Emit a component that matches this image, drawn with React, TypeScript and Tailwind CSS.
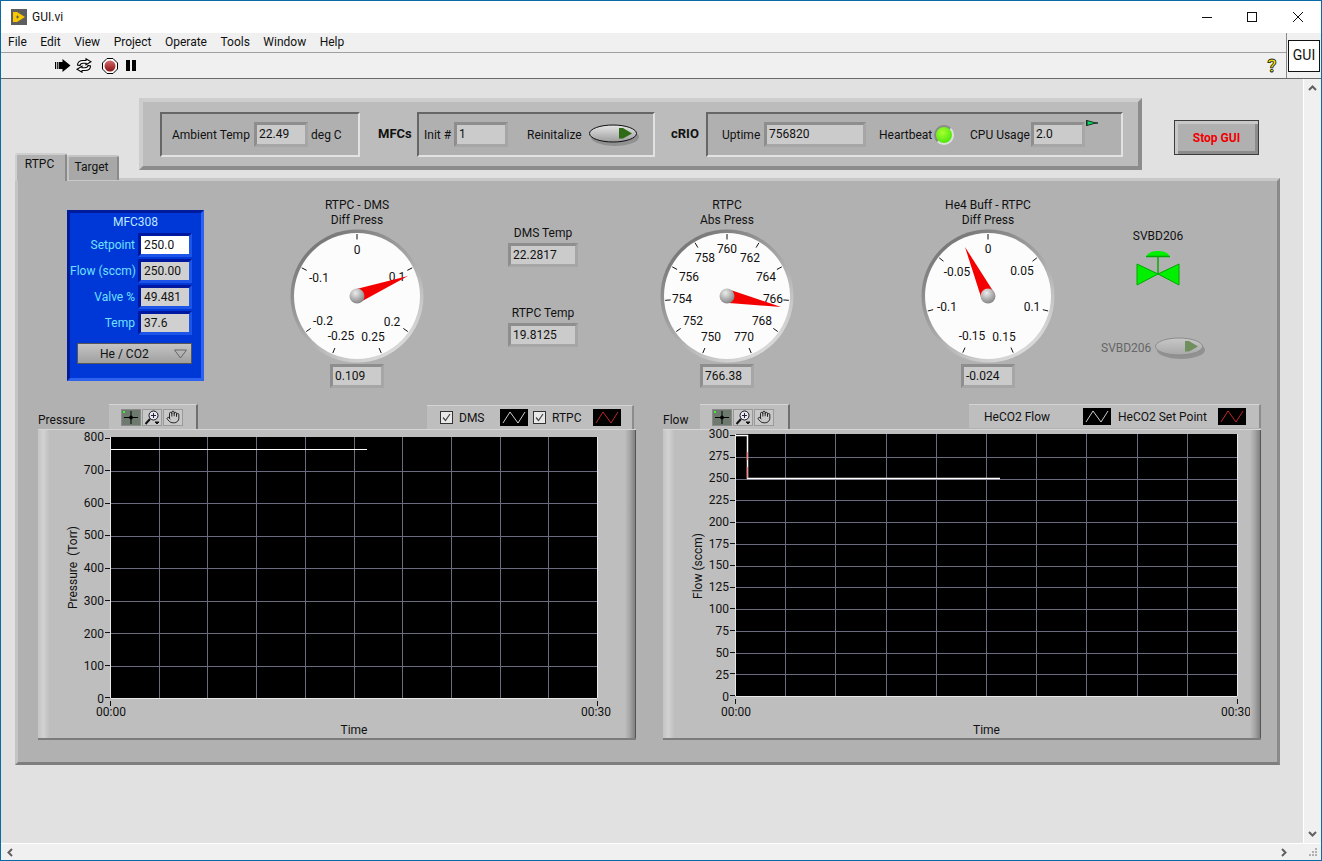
import { Hand } from "lucide-react";

const fontStack = "font-['Roboto','Noto_Sans',sans-serif]";

function NumBox({ value, w = "w-[54px]", h = "h-[24px]" }: { value: string; w?: string; h?: string }) {
  return (
    <div className={`${w} ${h} shrink-0 border-[3px] border-t-[#8e8e8e] border-l-[#8e8e8e] border-r-[#a6a6a6] border-b-[#a6a6a6] bg-[#cbcbcb] pl-[2px] text-[12px] leading-[18px] text-[#111]`}>
      {value}
    </div>
  );
}

function Group({ className, children }: { className: string; children: React.ReactNode }) {
  return (
    <div className={`${className} mt-[1px] h-[45px] flex items-center border-2 border-t-[#666] border-l-[#666] border-r-[#e2e2e2] border-b-[#e2e2e2] bg-[#b0b0b0] text-[12px] text-[#111]`}>
      {children}
    </div>
  );
}

function Toggle({ dim = false }: { dim?: boolean }) {
  const line = dim ? "#8c8c8c" : "#111";
  const fill = dim ? "#6f8f5f" : "#2f6a14";
  return (
    <svg width="52" height="24" className="shrink-0">
      <defs>
        <linearGradient id={dim ? "tgd" : "tg"} x1="0" y1="0" x2="0" y2="1">
          <stop offset="0" stopColor={dim ? "#c8c8c8" : "#e6e6e6"} />
          <stop offset="1" stopColor={dim ? "#a8a8a8" : "#9c9c9c"} />
        </linearGradient>
      </defs>
      <ellipse cx="26" cy="14" rx="24" ry="9" fill="#777" opacity="0.55" />
      <ellipse cx="24" cy="10.5" rx="23.5" ry="8.5" fill={`url(#${dim ? "tgd" : "tg"})`} stroke={line} />
      <path d="M30 5h4l9 5.5-9 5h-4z" fill={fill} />
    </svg>
  );
}

function MfcRow({ label, value, input = false }: { label: string; value: string; input?: boolean }) {
  return (
    <div className="flex h-[26px] items-center">
      <div className="w-[68px] pr-[3px] text-right text-[12px] whitespace-nowrap text-[#6fe0ff]">{label}</div>
      <div className={`w-[54px] h-[24px] border-[3px] border-t-[#0018a0] border-l-[#0018a0] border-r-[#1c55e8] border-b-[#1c55e8] pl-[3px] text-[12px] leading-[18px] text-[#111] ${input ? "bg-white" : "bg-[#d0d0d0]"}`}>
        {value}
      </div>
    </div>
  );
}

type GaugeProps = {
  id: string;
  title: [string, string];
  value: string;
  ticks: number[];
  labels: [string, number, number][];
  tip: [number, number];
};

function Gauge({ id, title, value, ticks, labels, tip }: GaugeProps) {
  const c = 68;
  const len = Math.hypot(tip[0], tip[1]);
  const nx = (-tip[1] / len) * 7;
  const ny = (tip[0] / len) * 7;
  return (
    <div className="flex w-[136px] shrink-0 flex-col items-center mt-[17px]">
      <div className="h-[30px] text-center text-[12px] leading-[15px] whitespace-nowrap text-[#111]">
        {title[0]}
        <br />
        {title[1]}
      </div>
      <svg width="136" height="136">
        <defs>
          <linearGradient id={`${id}-b`} x1="0.15" y1="0" x2="0.85" y2="1">
            <stop offset="0" stopColor="#6e6e6e" />
            <stop offset="0.5" stopColor="#a8a8a8" />
            <stop offset="1" stopColor="#e4e4e4" />
          </linearGradient>
          <radialGradient id={`${id}-h`} cx="0.4" cy="0.3" r="0.8">
            <stop offset="0" stopColor="#ececec" />
            <stop offset="1" stopColor="#777" />
          </radialGradient>
        </defs>
        <circle cx={c} cy={c} r="66.5" fill={`url(#${id}-b)`} />
        <circle cx={c} cy={c} r="63" fill="#fcfcfc" />
        {ticks.map((a) => {
          const r = (a * Math.PI) / 180;
          return (
            <line
              key={a}
              x1={c + Math.sin(r) * 56.5}
              y1={c - Math.cos(r) * 56.5}
              x2={c + Math.sin(r) * 62}
              y2={c - Math.cos(r) * 62}
              stroke="#111"
            />
          );
        })}
        {labels.map(([t, x, y]) => (
          <text key={t} x={c + x} y={c + y} fontSize="12" textAnchor="middle" dominantBaseline="central" fill="#111">
            {t}
          </text>
        ))}
        <polygon points={`${c + nx},${c + ny} ${c - nx},${c - ny} ${c + tip[0]},${c + tip[1]}`} fill="#f40000" />
        <circle cx={c} cy={c} r="7.5" fill={`url(#${id}-h)`} />
      </svg>
      <NumBox value={value} />
    </div>
  );
}

function TempReadout({ label, value, className }: { label: string; value: string; className: string }) {
  return (
    <div className={className}>
      <div className="h-[16px] text-center text-[12px] leading-[16px] whitespace-nowrap text-[#111]">{label}</div>
      <div className="mt-[2px]">
        <NumBox value={value} w="w-[70px]" />
      </div>
    </div>
  );
}

function CursorBtn() {
  return (
    <div className="flex h-[17px] w-[20px] items-center justify-center border border-[#8a8a8a] bg-[#6d7a6d]">
      <svg width="18" height="15" stroke="#000">
        <path d="M9 1v13M2 7.5h14" />
        <circle cx="9" cy="7.5" r="1.5" />
        <rect x="1" y="1" width="2" height="2" fill="#3cf03c" stroke="none" />
      </svg>
    </div>
  );
}

function ZoomBtn() {
  return (
    <div className="flex h-[17px] w-[20px] items-center justify-center border border-[#9a9a9a] bg-[#c8c8c8]">
      <svg width="18" height="15" fill="none" stroke="#111">
        <circle cx="10.5" cy="5.5" r="4.5" fill="#e8e8f4" />
        <path d="M8 5.5h5M10.5 3v5" stroke="#223" />
        <path d="M7 9l-4.5 5" strokeWidth="2" />
        <path d="M12 12h4l-2 2z" fill="#111" />
      </svg>
    </div>
  );
}

function HandBtn() {
  return (
    <div className="flex h-[17px] w-[20px] items-center justify-center border border-[#9a9a9a] bg-[#c8c8c8]">
      <Hand size={14} color="#111" strokeWidth={1.5} />
    </div>
  );
}

function Palette({ className }: { className: string }) {
  return (
    <div className={`${className} flex h-[25px] items-center gap-[1px] border-t border-t-[#d4d4d4] border-r-2 border-r-[#707070] bg-[#bebebe] pl-[12px]`}>
      <CursorBtn />
      <ZoomBtn />
      <HandBtn />
    </div>
  );
}

function Swatch({ color, className = "" }: { color: string; className?: string }) {
  return (
    <svg width="28" height="17" className={`shrink-0 ${className}`}>
      <rect width="28" height="17" fill="#000" />
      <path d="M3 14L10 3l8 11 7-11" fill="none" stroke={color} strokeWidth="0.8" />
    </svg>
  );
}

function Check({ className = "" }: { className?: string }) {
  return (
    <svg width="13" height="13" className={`shrink-0 ${className}`}>
      <rect x="0.5" y="0.5" width="12" height="12" fill="#e8e8e8" stroke="#333" />
      <path d="M3 6.5l2.5 3L10 3" fill="none" stroke="#444" strokeWidth="1.2" />
    </svg>
  );
}

type ChartProps = {
  title: string;
  yTitle: string;
  yLabels: string[];
  plotW: number;
  plotH: number;
  padTop: string;
  palette: string;
  legend: React.ReactNode;
  labelPad: string;
  timeH: string;
  lines: React.ReactNode;
};

function Chart({ title, yTitle, yLabels, plotW, plotH, padTop, palette, legend, labelPad, timeH, lines }: ChartProps) {
  const step = (plotH - 2) / (yLabels.length - 1);
  return (
    <div className="flex w-[598px] shrink-0 flex-col">
      <div className="flex h-[25px] items-end">
        <div className="w-[46px] shrink-0 pb-[1px] text-[12px] leading-[15px] text-[#111]">{title}</div>
        <Palette className={palette} />
        {legend}
      </div>
      <div className="flex h-[311px] border-t border-t-[#d6d6d6] border-b-2 border-b-[#7c7c7c] bg-[#bebebe]">
        <div className="w-[11px] shrink-0 bg-linear-to-r from-[#c4c4c4] via-[#d2d2d2] to-[#c0c0c0]" />
        <div className={`flex min-w-0 flex-1 flex-col ${padTop}`}>
          <div className="flex">
            <div className="flex w-[40px] shrink-0 items-center justify-center pl-[7px]">
              <span className="rotate-180 text-[12px] whitespace-pre text-[#111] [writing-mode:vertical-rl]">{yTitle}</span>
            </div>
            <div className="-my-[6px] flex w-[15px] shrink-0 flex-col items-end justify-between text-[12px] leading-[12px] text-[#111]">
              {yLabels.map((l) => (
                <span key={l}>{l}</span>
              ))}
            </div>
            <div className="flex w-[6px] flex-col justify-between py-[1px]">
              {yLabels.map((l) => (
                <span key={l} className="ml-[1px] h-[1px] w-[5px] bg-[#111]" />
              ))}
            </div>
            <svg width={plotW} height={plotH} className="shrink-0">
              <rect width={plotW} height={plotH} fill="#000" />
              {Array.from({ length: 9 }, (_, i) => {
                const x = Math.round(((plotW - 1) * (i + 1)) / 10) + 0.5;
                return <line key={i} x1={x} x2={x} y1="0" y2={plotH} stroke="#6b6b80" />;
              })}
              {yLabels.slice(1, -1).map((l, i) => {
                const y = Math.round(1 + step * (i + 1)) + 0.5;
                return <line key={l} x1="0" x2={plotW} y1={y} y2={y} stroke="#6b6b80" />;
              })}
              {lines}
              <path d={`M0.5 0V${plotH - 0.5}H${plotW - 0.5}V0`} fill="none" stroke="#e8e8e8" />
            </svg>
          </div>
          <div className="flex">
            <div className="w-[61px] shrink-0" />
            <div className="flex shrink-0 justify-between" style={{ width: plotW }}>
              <span className="mt-[2px] h-[5px] w-[1px] bg-[#111]" />
              <span className="mt-[2px] h-[5px] w-[1px] bg-[#111]" />
            </div>
          </div>
          <div className={`flex text-[12px] leading-[13px] text-[#111] ${labelPad}`}>
            <div className="w-[47px] shrink-0" />
            <div className="flex shrink-0 justify-between" style={{ width: plotW + 27 }}>
              <span>00:00</span>
              <span>00:30</span>
            </div>
          </div>
          <div className={`flex text-[12px] leading-[15px] text-[#111] ${timeH}`}>
            <div className="w-[61px] shrink-0" />
            <div className="shrink-0 text-center" style={{ width: plotW }}>
              Time
            </div>
          </div>
        </div>
        <div className="w-[11px] shrink-0 border-r border-r-[#555] bg-linear-to-r from-[#bebebe] via-[#a4a4a4] to-[#808080]" />
      </div>
    </div>
  );
}

function RunIcon() {
  return (
    <svg width="16" height="13" viewBox="0 0 16 13">
      <path d="M4 3h3.5V0L15.5 6.5 7.5 13v-3H4z" fill="#000" />
      <path d="M0 3h1.2v7H0zM2.2 3h1.2v7H2.2z" fill="#000" />
    </svg>
  );
}

function ContinuousIcon() {
  return (
    <svg width="16" height="15" viewBox="0 0 16 15" fill="#fff" stroke="#000" strokeWidth="1.1">
      <path d="M1.5 7C1.5 4 4 2.5 7 2.5h3V.8l5 3-5 3V5.2H7C5.5 5.2 4.2 6 4 7.5z" />
      <path d="M14.5 8c0 3-2.5 4.5-5.5 4.5H6v1.7l-5-3 5-3v1.6h3c1.5 0 2.8-.8 3-2.3z" />
    </svg>
  );
}

function AbortIcon() {
  return (
    <svg width="16" height="16" viewBox="0 0 16 16">
      <defs>
        <linearGradient id="abort" x1="0" y1="0" x2="0" y2="1">
          <stop offset="0" stopColor="#d46a6a" />
          <stop offset="1" stopColor="#8c1414" />
        </linearGradient>
      </defs>
      <path d="M5 .5h6L15.5 5v6L11 15.5H5L.5 11V5z" fill="#fff" stroke="#000" />
      <circle cx="8" cy="8" r="5.5" fill="url(#abort)" />
    </svg>
  );
}

export default function App() {
  return (
    <div className={`flex h-[861px] w-[1322px] flex-col overflow-hidden border border-[#0a6aa8] bg-white ${fontStack}`}>
      {/* title bar */}
      <div className="flex h-[32px] shrink-0 items-center bg-white pl-[10px] text-[12px] text-[#111]">
        <svg width="16" height="16" viewBox="0 0 16 16" className="mr-[5px]">
          <rect width="16" height="16" fill="#5e5e5e" />
          <path d="M2 3h4l8 5-8 5H2z" fill="#fac800" />
          <path d="M5 8h3M6.5 6.5v3" stroke="#5e5e5e" />
        </svg>
        <span>GUI.vi</span>
        <div className="ml-auto flex items-center">
          <svg width="46" height="12" stroke="#111">
            <path d="M19 6.5h10" />
          </svg>
          <svg width="46" height="12" fill="none" stroke="#111">
            <rect x="18.5" y="1.5" width="9" height="9" />
          </svg>
          <svg width="46" height="12" fill="none" stroke="#111">
            <path d="M18 1l10 10M28 1L18 11" />
          </svg>
        </div>
      </div>

      {/* menu and toolbar */}
      <div className="flex h-[46px] shrink-0 border-b border-b-[#696969] bg-[#f0f0f0]">
        <div className="flex flex-1 flex-col">
          <div className="flex h-[20px] items-center gap-[13.5px] border-b border-b-[#a0a0a0] pl-[7px] pb-[1px] text-[12px] text-[#111]">
            <span>File</span>
            <span>Edit</span>
            <span>View</span>
            <span>Project</span>
            <span>Operate</span>
            <span>Tools</span>
            <span>Window</span>
            <span>Help</span>
          </div>
          <div className="flex flex-1 items-center pl-[54px]">
            <RunIcon />
            <div className="ml-[5px]">
              <ContinuousIcon />
            </div>
            <div className="ml-[10px]">
              <AbortIcon />
            </div>
            <svg width="10" height="11" className="ml-[8px]">
              <path d="M0 0h4v11H0zM6 0h4v11H6z" fill="#000" />
            </svg>
            <svg width="18" height="20" className="ml-auto mr-[5px]">
              <text x="9" y="16" fontSize="18" fontWeight="700" textAnchor="middle" fill="#f6f000" stroke="#111" strokeWidth="0.8">
                ?
              </text>
            </svg>
          </div>
        </div>
        <div className="flex w-[35px] items-center justify-end border-l border-l-[#8a8a8a] pr-[1px]">
          <div className="flex h-[32px] w-[32px] items-center justify-center border border-[#111] bg-white text-[14px] text-[#111]">GUI</div>
        </div>
      </div>

      <div className="flex min-h-0 flex-1">
        {/* front panel */}
        <div className="flex min-w-0 flex-1 flex-col border-r border-r-white bg-[#e1e1e1] pl-[14px] pt-[19px]">
          <div className="flex h-[82px] shrink-0">
            <div className="relative z-10 flex w-[124px] shrink-0 items-end text-[12px] text-[#111]">
              <div className="h-[28px] w-[52px] rounded-t-[3px] border-[2px] border-b-0 border-t-[#cfcfcf] border-l-[#cfcfcf] border-r-[#8a8a8a] bg-[#b1b1b1] pr-[3px] text-center -mb-[1px]">RTPC</div>
              <div className="h-[25px] w-[52px] rounded-t-[3px] border-[2px] border-b-0 border-t-[#c4c4c4] border-l-[#c4c4c4] border-r-[#8a8a8a] bg-[#a8a8a8] pt-[1px] pr-[3px] text-center">Target</div>
            </div>

            {/* status strip */}
            <div className="flex h-[72px] w-[1003px] shrink-0 items-center border-[4px] border-t-[#cdcdcd] border-l-[#cdcdcd] border-r-[#8c8c8c] border-b-[#8c8c8c] bg-[#bcbcbc] pl-[17px]">
              <Group className="w-[200px] pl-[10px]">
                <span className="w-[82px] shrink-0 whitespace-nowrap">Ambient Temp</span>
                <NumBox value="22.49" h="h-[25px]" />
                <span className="ml-[3px] whitespace-nowrap">deg C</span>
              </Group>
              <span className="w-[57px] shrink-0 pl-[18px] text-[13px] font-bold text-[#111]">MFCs</span>
              <Group className="w-[238px] pl-[5px]">
                <span className="w-[30px] shrink-0 whitespace-nowrap">Init #</span>
                <NumBox value="1" h="h-[25px]" />
                <span className="ml-[19px] w-[62px] shrink-0 whitespace-nowrap">Reinitalize</span>
                <Toggle />
              </Group>
              <span className="w-[51px] shrink-0 pl-[16px] text-[13px] font-bold text-[#111]">cRIO</span>
              <Group className="w-[417px] pl-[14px]">
                <span className="w-[42px] shrink-0">Uptime</span>
                <NumBox value="756820" w="w-[102px]" h="h-[25px]" />
                <span className="ml-[13px] w-[55px] shrink-0">Heartbeat</span>
                <span className="h-[20px] w-[20px] shrink-0 rounded-full border-2 border-t-[#8a8a8a] border-l-[#8a8a8a] border-r-[#e0e0e0] border-b-[#e0e0e0] bg-[radial-gradient(circle_at_40%_35%,#a8ff30,#30e000)]" />
                <span className="ml-[16px] w-[61px] shrink-0 whitespace-nowrap">CPU Usage</span>
                <NumBox value="2.0" h="h-[25px]" />
                <svg width="13" height="6" className="mb-[24px] ml-[1px] shrink-0">
                  <path d="M.5 0v6M1 .5l7 2 4 .5-4 .5-7 2z" fill="#00d860" stroke="#111" strokeWidth="0.8" />
                </svg>
              </Group>
            </div>

            <div className="ml-[32px] mt-[22px] flex h-[35px] w-[85px] shrink-0 items-center justify-center border border-[#3c3c3c] bg-[#b0b0b0] text-[12px] font-bold text-[#f00000] shadow-[inset_3px_3px_0_#c8c8c8,inset_-3px_-3px_0_#8c8c8c]">
              Stop GUI
            </div>
          </div>

          {/* tab panel */}
          <div className="h-[587px] w-[1265px] shrink-0 -mt-[2px] border-[3px] border-t-[#c8c8c8] border-l-[#c4c4c4] border-r-[#8a8a8a] border-b-[#7e7e7e] bg-[#b1b1b1]">
            <div className="flex h-[223px] items-start">
              <div className="ml-[49px] mt-[29px] h-[171px] w-[137px] shrink-0 border-[3px] border-t-[#001a9c] border-l-[#001a9c] border-r-[#2c62ee] border-b-[#2c62ee] bg-[#0038d8]">
                <div className="h-[19px] text-center text-[12px] leading-[19px] text-[#bfe6ff]">MFC308</div>
                <MfcRow label="Setpoint" value="250.0" input />
                <MfcRow label="Flow (sccm)" value="250.00" />
                <MfcRow label="Valve %" value="49.481" />
                <MfcRow label="Temp" value="37.6" />
                <div className="ml-[7px] mt-[7px] flex h-[21px] w-[115px] items-center border border-[#555] bg-linear-to-b from-[#c4c4c4] to-[#a0a0a0] pl-[22px] text-[12px] text-[#111]">
                  He / CO2
                  <svg width="13" height="10" className="ml-auto mr-[4px]">
                    <path d="M.5 1h12L6.5 9z" fill="none" stroke="#666" />
                  </svg>
                </div>
              </div>

              <div className="ml-[85px]">
                <Gauge
                  id="g1"
                  title={["RTPC - DMS", "Diff Press"]}
                  value="0.109"
                  ticks={[0, 63, -63, 125, -125, 157, -157]}
                  labels={[
                    ["0", 0, -46],
                    ["-0.1", -38, -18],
                    ["0.1", 40, -19],
                    ["-0.2", -34, 25],
                    ["0.2", 35, 26],
                    ["-0.25", -16, 40],
                    ["0.25", 16, 41],
                  ]}
                  tip={[51, -20]}
                />
              </div>

              <div className="ml-[83px] flex shrink-0 flex-col">
                <TempReadout label="DMS Temp" value="22.2817" className="mt-[44px]" />
                <TempReadout label="RTPC Temp" value="19.8125" className="mt-[38px]" />
              </div>

              <div className="ml-[81px]">
                <Gauge
                  id="g2"
                  title={["RTPC", "Abs Press"]}
                  value="766.38"
                  ticks={[0, 31, -31, 62, -62, 94, -94, 125, -125, 157, -157]}
                  labels={[
                    ["760", 0, -47],
                    ["758", -22, -38],
                    ["762", 23, -38],
                    ["756", -38, -19],
                    ["764", 39, -19],
                    ["754", -45, 3],
                    ["766", 46, 3],
                    ["752", -34, 25],
                    ["768", 35, 25],
                    ["750", -16, 41],
                    ["770", 17, 41],
                  ]}
                  tip={[54, 11]}
                />
              </div>

              <div className="ml-[125px]">
                <Gauge
                  id="g3"
                  title={["He4 Buff - RTPC", "Diff Press"]}
                  value="-0.024"
                  ticks={[0, 52, -52, 104, -104, 156, -156]}
                  labels={[
                    ["0", 0, -47],
                    ["-0.05", -31, -24],
                    ["0.05", 34, -25],
                    ["-0.1", -41, 11],
                    ["0.1", 44, 11],
                    ["-0.15", -16, 40],
                    ["0.15", 16, 41],
                  ]}
                  tip={[-23, -49]}
                />
              </div>

              <div className="ml-[38px] flex w-[122px] shrink-0 flex-col">
                <div className="mt-[47px] h-[16px] pl-[6px] text-center text-[12px] leading-[16px] text-[#111]">SVBD206</div>
                <svg width="44" height="38" className="ml-[42px] mt-[6px]">
                  <path d="M11 6a11 5 0 0 1 22 0z" fill="#00f000" />
                  <path d="M10 6.5h24M22 6v18" stroke="#00a800" strokeWidth="1.4" fill="none" />
                  <path d="M1 14l21 10L1 35zM43 14L22 24l21 11z" fill="#00f000" stroke="#00a800" />
                </svg>
                <div className="ml-[7px] mt-[48px] flex items-center text-[12px] text-[#666]">
                  <span className="mr-[4px] whitespace-nowrap">SVBD206</span>
                  <Toggle dim />
                </div>
              </div>
            </div>

            {/* charts */}
            <div className="flex gap-[27px] pl-[20px]">
              <Chart
                title="Pressure"
                yTitle="Pressure  (Torr)"
                yLabels={["800", "700", "600", "500", "400", "300", "200", "100", "0"]}
                plotW={488}
                plotH={262}
                padTop="pt-[7px]"
                palette="ml-[25px] w-[89px]"
                labelPad=""
                timeH="pt-[4px]"
                legend={
                  <div className="ml-auto mr-[2px] flex h-[24px] w-[207px] items-center border-t border-t-[#d4d4d4] border-r-2 border-r-[#8c8c8c] bg-[#bebebe] pl-[13px] text-[12px] text-[#111]">
                    <Check />
                    <span className="ml-[6px] w-[41px]">DMS</span>
                    <Swatch color="#fff" />
                    <Check className="ml-[5px]" />
                    <span className="ml-[6px] w-[41px]">RTPC</span>
                    <Swatch color="#f03030" />
                  </div>
                }
                lines={<path d="M0 12.5H257" stroke="#fff" fill="none" />}
              />
              <Chart
                title="Flow"
                yTitle="Flow (sccm)"
                yLabels={["300", "275", "250", "225", "200", "175", "150", "125", "100", "75", "50", "25", "0"]}
                plotW={503}
                plotH={263}
                padTop="pt-[4px]"
                palette="-ml-[9px] w-[90px]"
                labelPad="mt-[2px]"
                timeH="pt-[4px]"
                legend={
                  <div className="ml-auto mb-[1px] flex h-[24px] w-[292px] items-center border-t border-t-[#d4d4d4] border-r-2 border-r-[#8c8c8c] bg-[#bebebe] pl-[15px] text-[12px] text-[#111]">
                    <span className="w-[99px] whitespace-nowrap">HeCO2 Flow</span>
                    <Swatch color="#fff" />
                    <span className="ml-[7px] w-[100px] whitespace-nowrap">HeCO2 Set Point</span>
                    <Swatch color="#f03030" />
                  </div>
                }
                lines={
                  <>
                    <path d="M0 1.5H12.5V44.5H265" stroke="#fff" fill="none" strokeWidth="1.5" />
                    <path d="M12 18v8M12 33v11" stroke="#d03030" strokeWidth="1" fill="none" />
                  </>
                }
              />
            </div>
          </div>
        </div>

        {/* vertical scrollbar */}
        <div className="flex w-[17px] shrink-0 flex-col items-center justify-between bg-[#f0f0f0] py-[6px]">
          <svg width="9" height="6" fill="none" stroke="#606060" strokeWidth="2">
            <path d="M1 5l3.5-3.5L8 5" />
          </svg>
          <svg width="9" height="6" fill="none" stroke="#606060" strokeWidth="2">
            <path d="M1 1l3.5 3.5L8 1" />
          </svg>
        </div>
      </div>

      {/* horizontal scrollbar */}
      <div className="flex h-[17px] shrink-0 items-center border-t border-t-white bg-[#f0f0f0] pl-[6px]">
        <svg width="6" height="9" fill="none" stroke="#606060" strokeWidth="2">
          <path d="M5 1L1.5 4.5 5 8" />
        </svg>
        <svg width="6" height="9" fill="none" stroke="#606060" strokeWidth="2" className="ml-auto mr-[22px]">
          <path d="M1 1l3.5 3.5L1 8" />
        </svg>
        <svg width="9" height="9" className="mr-[3px]" fill="#b0b0b0">
          <path d="M6 0h2v2H6zM3 3h2v2H3zM6 3h2v2H6zM0 6h2v2H0zM3 6h2v2H3zM6 6h2v2H6z" />
        </svg>
      </div>
    </div>
  );
}
